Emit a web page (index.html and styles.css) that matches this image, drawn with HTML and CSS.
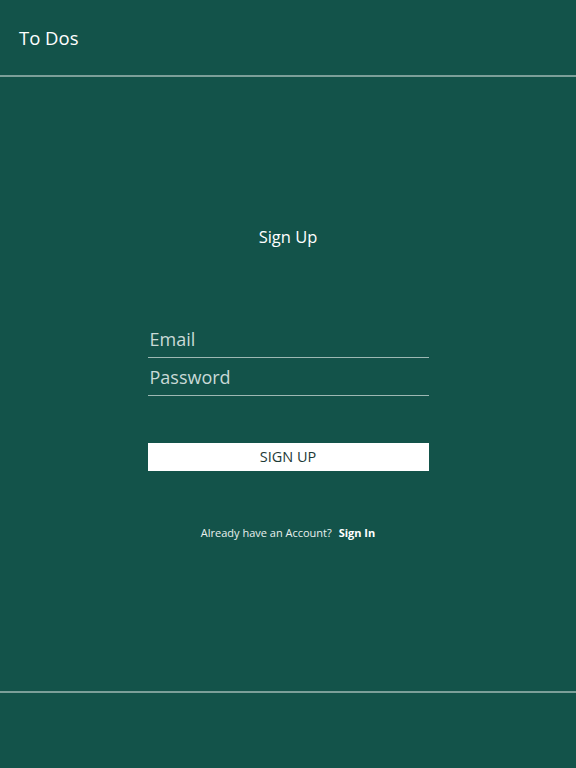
FILE: index.html
```html
<!DOCTYPE html>
<html>
<head>
<meta charset="utf-8">
<link rel="stylesheet" href="styles.css">
</head>
<body>
<div class="page">
  <header class="header">
    <div class="brand">To Dos</div>
  </header>
  <main class="main">
    <h1 class="title">Sign Up</h1>
    <form class="form">
      <input class="field" type="text" placeholder="Email">
      <input class="field" type="password" placeholder="Password">
      <button class="btn" type="button">SIGN UP</button>
    </form>
    <p class="alt">Already have an Account? <a class="alt-link" href="#">Sign In</a></p>
  </main>
  <footer class="footer"></footer>
</div>
</body>
</html>
```
FILE: styles.css
```css
* { box-sizing: border-box; }
html, body { margin: 0; padding: 0; }
body {
  background: #13534a;
  font-family: "Open Sans", "Noto Sans", sans-serif;
  color: #ffffff;
}
.page {
  height: 768px;
  display: flex;
  flex-direction: column;
}
.header {
  height: 77px;
  border-bottom: 2px solid #7c9f99;
  display: flex;
  align-items: center;
  padding: 0 19px 0;
}
.brand {
  font-size: 18.5px;
  line-height: 24px;
}
.main {
  flex: 1;
  display: flex;
  flex-direction: column;
  align-items: center;
  padding-top: 150px;
}
.title {
  margin: 0;
  font-size: 16.5px;
  font-weight: 400;
  line-height: 20px;
}
.form {
  width: 281px;
  margin-top: 73px;
  display: flex;
  flex-direction: column;
}
.field {
  height: 38px;
  background: transparent;
  border: none;
  border-bottom: 1px solid #9db8b3;
  padding: 0 2px 0;
  font-family: inherit;
  font-size: 18px;
  color: #c9dad7;
  outline: none;
}
.field::placeholder { color: #c9dad7; }
.btn {
  margin-top: 47px;
  height: 28px;
  background: #ffffff;
  border: none;
  font-family: inherit;
  font-size: 14.5px;
  color: #1d3a36;
  padding: 0 0 2px;
}
.alt {
  margin: 55px 0 0;
  font-size: 11px;
  line-height: 14px;
  color: #e8f0ee;
}
.alt-link {
  margin-left: 4px;
  color: #ffffff;
  font-weight: 700;
  text-decoration: none;
}
.footer {
  height: 77px;
  border-top: 2px solid #7c9f99;
}
```
